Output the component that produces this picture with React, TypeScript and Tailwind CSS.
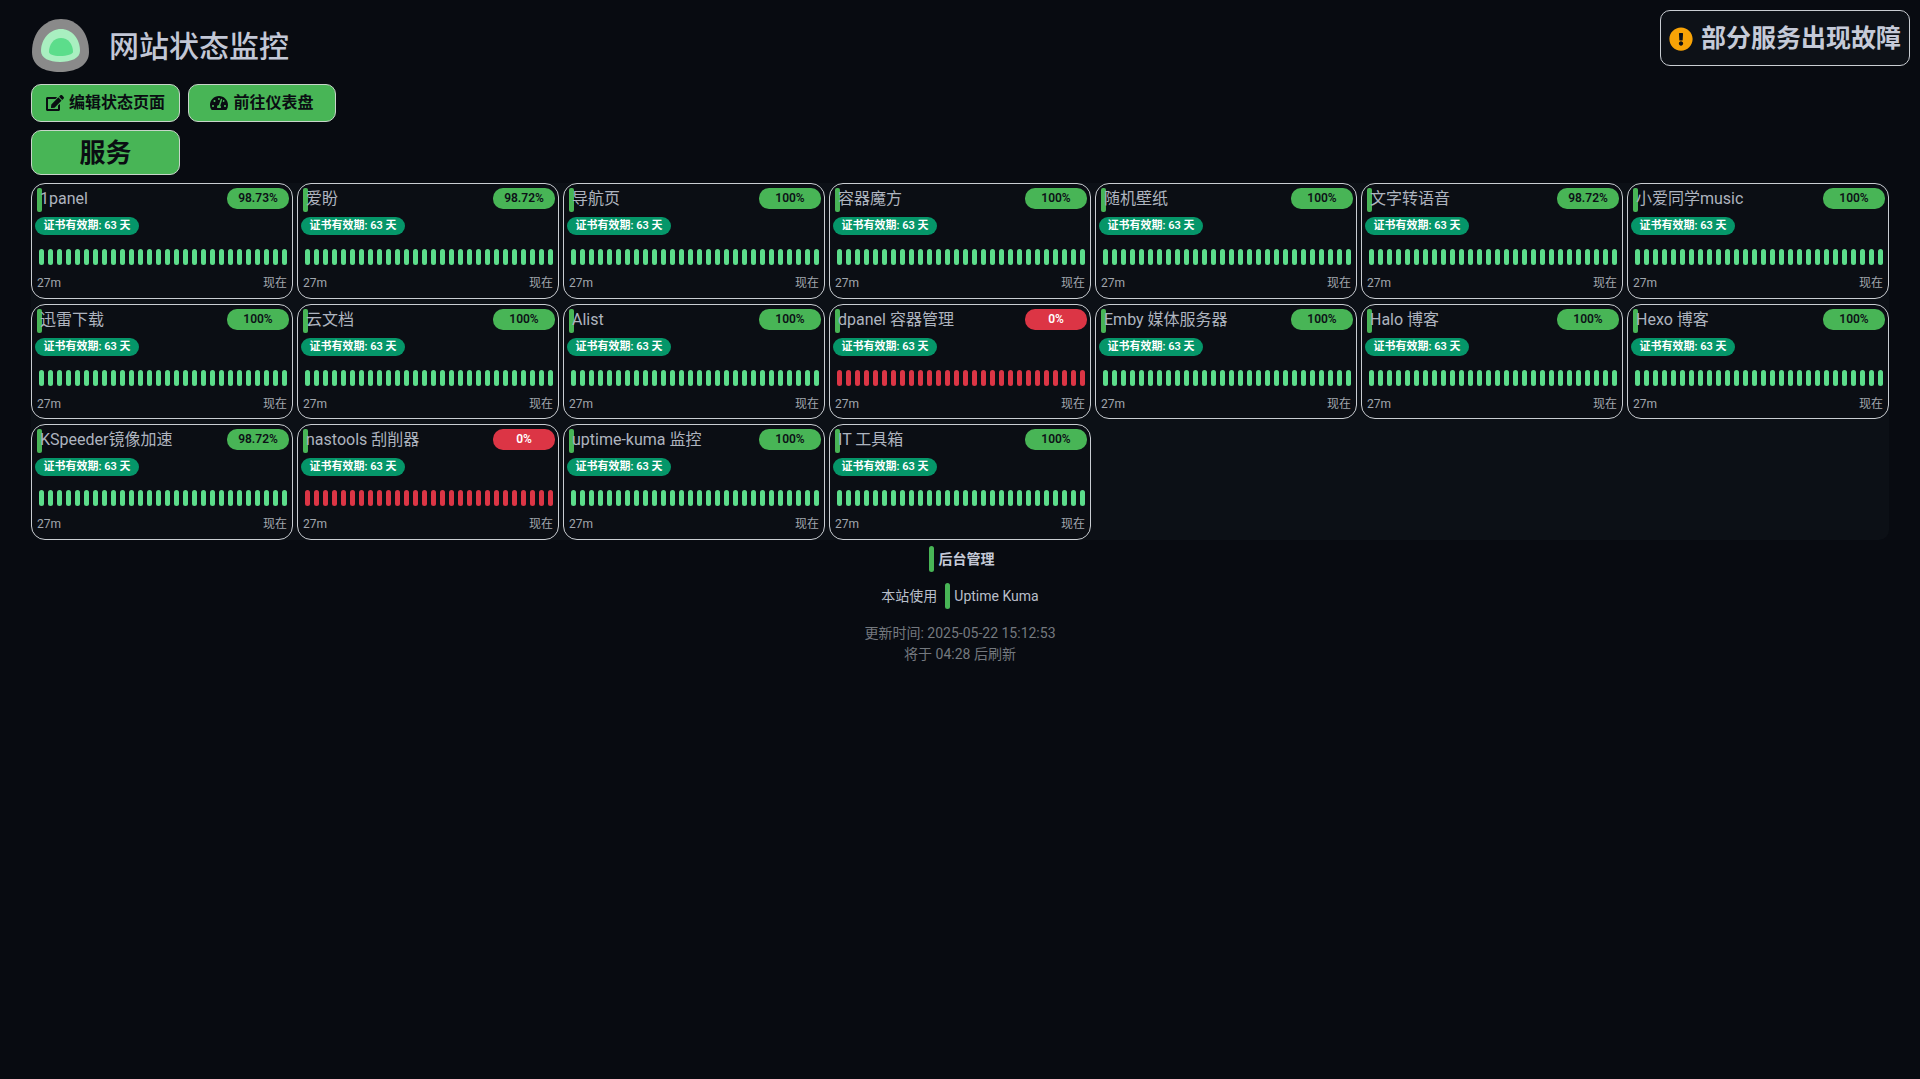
import { FaEdit, FaTachometerAlt, FaExclamationCircle } from "react-icons/fa";

const services: [string, string][] = [
  ["1panel", "98.73%"], ["爱盼", "98.72%"], ["导航页", "100%"], ["容器魔方", "100%"], ["随机壁纸", "100%"], ["文字转语音", "98.72%"], ["小爱同学music", "100%"],
  ["迅雷下载", "100%"], ["云文档", "100%"], ["Alist", "100%"], ["dpanel 容器管理", "0%"], ["Emby 媒体服务器", "100%"], ["Halo 博客", "100%"], ["Hexo 博客", "100%"],
  ["KSpeeder镜像加速", "98.72%"], ["nastools 刮削器", "0%"], ["uptime-kuma 监控", "100%"], ["IT 工具箱", "100%"],
];
const beats = Array.from({ length: 28 }, (_, i) => i);

function Card({ name, pct }: { name: string; pct: string }) {
  const down = pct === "0%";
  return (
    <div className="h-full rounded-[14px] border border-[#c9cdd2] bg-[#0b0e14] px-[3px] pt-[3px] flex flex-col">
      <div className="flex items-start justify-between h-[30px]">
        <div className="flex items-start min-w-0 ml-[2px]">
          <span className="w-[5px] h-[24px] rounded-[2px] bg-[#48b556] shrink-0 mt-[1px] -mr-[2px]" />
          <span className="text-[16px] leading-[24px] text-[#aeb4bf] whitespace-nowrap">{name}</span>
        </div>
        <span className={`w-[62px] h-[21px] mt-[0.5px] rounded-[10px] flex items-center justify-center text-[12px] font-semibold ${down ? "bg-[#dc3545] text-white" : "bg-[#48b556] text-[#0d1117]"}`}>{pct}</span>
      </div>
      <span className="self-start h-[18px] px-[8.5px] -mt-[0.5px] rounded-[9px] bg-[#059669] text-white text-[11px] font-semibold leading-[18px] whitespace-nowrap">证书有效期: 63 天</span>
      <div className="flex justify-between mt-[14px] pl-[4px] pr-[2px]">
        {beats.map((b) => (
          <span key={b} className={`w-[5px] h-[16px] rounded-[3px] ${down ? "bg-[#dc3545]" : "bg-[#5cdd8b]"}`} />
        ))}
      </div>
      <div className="flex justify-between mt-[10px] px-[2px] text-[12px] leading-[16px] text-[#a1a6ad]">
        <span>27m</span>
        <span>现在</span>
      </div>
    </div>
  );
}

export default function App() {
  return (
    <div className="relative min-h-[1079px] bg-[#080b11] px-[31px] pt-[19px] font-['Roboto','Noto_Sans_CJK_SC',sans-serif] text-[#c5cad8]">
      <div className="flex items-center h-[53px] gap-[19px]">
        <svg width="59" height="54" viewBox="0 0 59 54" className="shrink-0">
          <path d="M30 0C46 0 58 13 58 33C58 47 44 53 29 53C13 53 1 47 1 33C1 13 14 0 30 0Z" fill="#8a8a8a" />
          <path d="M30 10C41 10 49 20 49 32C49 39 40 43 29 43C18 43 10 39 10 32C10 20 19 10 30 10Z" fill="#a9efc0" />
          <path d="M30 19C37 19 42 25 42 33C42 35 36 37 29 37C22 37 18 35 18 33C18 25 23 19 30 19Z" fill="#5cdd8b" />
        </svg>
        <h1 className="text-[30px] leading-[40px] pt-[2px] font-medium text-[#c2c7d6]">网站状态监控</h1>
      </div>
      <div className="flex gap-[8px] mt-[12px]">
        <button className="w-[149px] h-[38px] rounded-[10px] border border-[#c8d5ca] bg-[#48b556] flex items-center justify-center gap-[5px] text-[16px] font-bold text-[#0a0d12]">
          <FaEdit className="text-[18px]" />编辑状态页面
        </button>
        <button className="w-[148px] h-[38px] rounded-[10px] border border-[#c8d5ca] bg-[#48b556] flex items-center justify-center gap-[5px] text-[16px] font-bold text-[#0a0d12]">
          <FaTachometerAlt className="text-[18px]" />前往仪表盘
        </button>
      </div>
      <div className="w-[149px] h-[45px] mt-[8px] pt-[1px] rounded-[10px] border border-[#c8d5ca] bg-[#48b556] flex items-center justify-center text-[26px] font-bold text-[#0a0d12]">服务</div>
      <div className="grid grid-cols-7 grid-rows-[116px_115px_116px] gap-x-[4px] gap-y-[5px] mt-[8px] w-[1858px] bg-[#0c1016] rounded-[10px]">
        {services.map(([n, p]) => <Card key={n} name={n} pct={p} />)}
      </div>
      <div className="w-[1858px] flex flex-col items-center">
        <div className="flex items-center gap-[5px] mt-[6px] ml-[3px] text-[14px] font-bold text-[#c5cad8]">
          <span className="w-[5px] h-[26px] rounded-[3px] bg-[#48b556]" />后台管理
        </div>
        <div className="flex items-center mt-[11px] text-[14px] text-[#b9bfca]">
          <span>本站使用</span>
          <span className="w-[5px] h-[26px] rounded-[3px] bg-[#48b556] ml-[8px] mr-[4px]" />
          <span>Uptime Kuma</span>
        </div>
        <div className="mt-[14px] text-[14px] leading-[21px] text-[#74797f] text-center">
          <div>更新时间: 2025-05-22 15:12:53</div>
          <div>将于 04:28 后刷新</div>
        </div>
      </div>
      <div className="absolute top-[10px] right-[10px] w-[250px] h-[56px] pt-[2px] rounded-[10px] border border-[#c9cdd2] bg-[#0d1117] flex items-center justify-center gap-[8px] text-[25px] font-bold text-[#c5cad8]">
        <FaExclamationCircle className="text-[#f8a306] text-[24px]" />部分服务出现故障
      </div>
    </div>
  );
}
